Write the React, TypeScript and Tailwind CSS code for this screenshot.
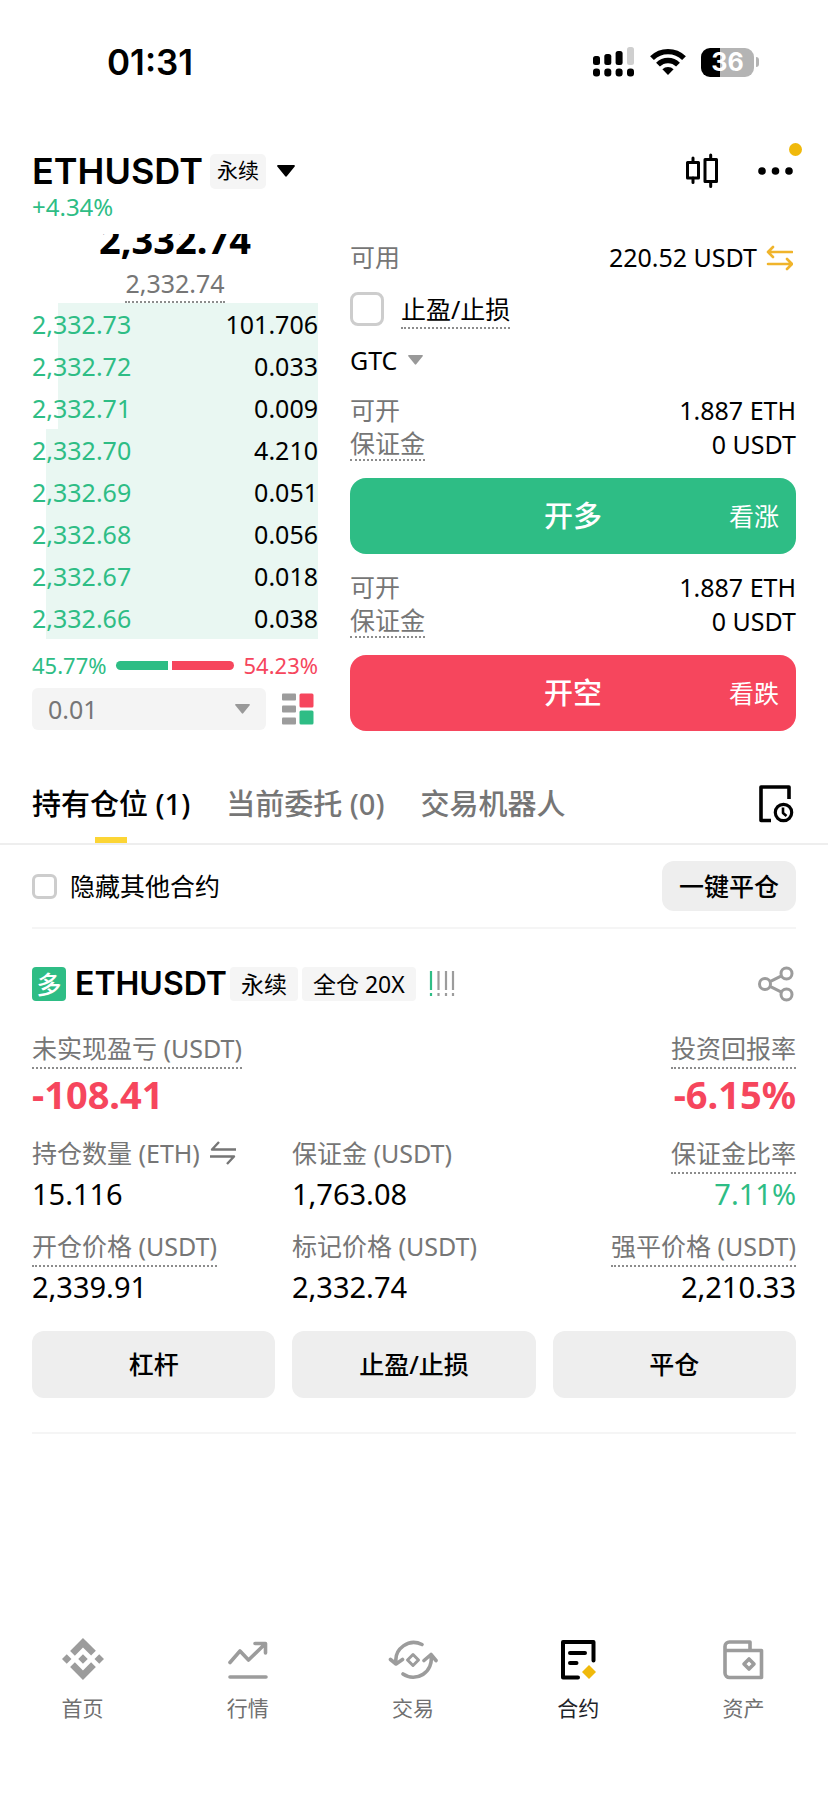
import React from "react";

const bids = [
  { price: "2,332.73", size: "101.706", depth: 91 },
  { price: "2,332.72", size: "0.033", depth: 91 },
  { price: "2,332.71", size: "0.009", depth: 91 },
  { price: "2,332.70", size: "4.210", depth: 95 },
  { price: "2,332.69", size: "0.051", depth: 95 },
  { price: "2,332.68", size: "0.056", depth: 95 },
  { price: "2,332.67", size: "0.018", depth: 95 },
  { price: "2,332.66", size: "0.038", depth: 95 },
];

function StatusBar() {
  return (
    <div className="flex h-20 items-end justify-between pl-[107px] pr-[69px]">
      <span className="font-['Inter',sans-serif] text-[35px] font-semibold leading-9">01:31</span>
      <div className="flex h-9 items-center gap-[15px]">
        <svg width="42" height="30" viewBox="0 0 42 30" aria-hidden="true">
          <rect x="0" y="9" width="7" height="9" rx="2.5" />
          <rect x="11.3" y="7" width="7" height="11" rx="2.5" />
          <rect x="22.6" y="4" width="7" height="14" rx="2.5" />
          <rect x="34" y="0" width="7" height="18" rx="2.5" fill="#cfcfcf" />
          <rect x="0" y="21.5" width="7" height="8" rx="3" />
          <rect x="11.3" y="21.5" width="7" height="8" rx="3" />
          <rect x="22.6" y="21.5" width="7" height="8" rx="3" />
          <rect x="34" y="21.5" width="7" height="8" rx="3" />
        </svg>
        <svg width="36" height="28" viewBox="0 0 36 28" fill="none" stroke="#000" strokeWidth="5.4" aria-hidden="true">
          <path d="M2 10.2a22.8 22.8 0 0 1 32 0" />
          <path d="M8 16.6a14.2 14.2 0 0 1 20 0" />
          <path d="M18 27l-5.6-5.8a8 8 0 0 1 11.2 0z" fill="#000" stroke="none" />
        </svg>
        <div className="flex items-center gap-[2px]">
          <span className="flex h-[29px] w-[53px] items-center justify-center rounded-[9px] bg-[linear-gradient(90deg,#000_36%,#b4b4b4_36%)] font-['Inter',sans-serif] text-[25px] font-bold leading-none text-white">
            36
          </span>
          <span className="h-[10px] w-[3px] rounded-r-full bg-[#b4b4b4]" />
        </div>
      </div>
    </div>
  );
}

function Header() {
  return (
    <header className="px-8 pt-[71px]">
      <div className="flex h-10 items-center justify-between">
        <button type="button" className="flex items-center">
          <h1 className="font-['Inter',sans-serif] text-[36px] font-semibold leading-10">ETHUSDT</h1>
          <span className="ml-[7px] flex h-[35px] items-center rounded-[5px] bg-[#f5f5f5] px-[7px] text-[21px]">永续</span>
          <svg className="ml-[11px]" width="18" height="12" viewBox="0 0 18 12" aria-hidden="true">
            <path d="M1 0h16a1 1 0 0 1 .7 1.600l-7.700 9.500a1.300 1.300 0 0 1-2 0L.3 1.600A1 1 0 0 1 1 0z" />
          </svg>
        </button>
        <div className="flex items-center gap-[38px] pr-[3px]">
          <button type="button" aria-label="K线图">
            <svg width="34" height="36" viewBox="0 0 34 36" fill="none" stroke="#000" strokeWidth="3" strokeLinejoin="round" strokeLinecap="round" aria-hidden="true">
              <rect x="2.500" y="9.500" width="11" height="15.500" />
              <path d="M8 5v4.500M8 25v4.500" />
              <rect x="20" y="6.500" width="11.500" height="22" />
              <path d="M25.700 2v4.500M25.700 28.500v5" />
            </svg>
          </button>
          <button type="button" aria-label="更多" className="relative">
            <svg width="36" height="36" viewBox="0 0 36 36" aria-hidden="true">
              <circle cx="5" cy="18" r="3.800" />
              <circle cx="18.500" cy="18" r="3.800" />
              <circle cx="32" cy="18" r="3.800" />
            </svg>
            <span className="absolute -right-[9px] -top-[10px] size-[13px] rounded-full bg-[#f0b90b]" />
          </button>
        </div>
      </div>
      <p className="text-[24px] leading-8 text-[#2ebd85]">+4.34%</p>
    </header>
  );
}

function CaretDown({ className = "" }: { className?: string }) {
  return (
    <svg className={className} width="15" height="10" viewBox="0 0 15 10" fill="#999" aria-hidden="true">
      <path d="M.8 0h13.400a.7.7 0 0 1 .5 1.200L8.200 9.300a1 1 0 0 1-1.400 0L.3 1.200A.7.700 0 0 1 .8 0z" />
    </svg>
  );
}

function OrderBook() {
  return (
    <section className="flex flex-col">
      <div className="flex h-[27px] items-end justify-center overflow-hidden">
        <span className="text-[38px] font-bold leading-[44px]">2,332.74</span>
      </div>
      <div className="flex h-[42px] items-end justify-center">
        <span className="border-b-2 border-dotted border-[#8c8c8c] text-[25px] leading-9 text-[#767676]">2,332.74</span>
      </div>
      <table className="w-full border-collapse text-[25px] leading-8">
        <tbody>
          {bids.map((b) => (
            <tr
              key={b.price}
              className="h-[42px]"
              style={{ background: `linear-gradient(to left, #e9f7f2 ${b.depth}%, transparent ${b.depth}%)` }}
            >
              <td className="p-0 text-left text-[#2ebd85]">{b.price}</td>
              <td className="p-0 text-right">{b.size}</td>
            </tr>
          ))}
        </tbody>
      </table>
      <div className="mt-[10px] flex h-8 items-center gap-[9px] text-[22px]">
        <span className="text-[#2ebd85]">45.77%</span>
        <span className="flex h-[9px] flex-1 gap-1">
          <span className="rounded-l-full bg-[#2ebd85]" style={{ flexGrow: 45.77 }} />
          <span className="rounded-r-full bg-[#f6465d]" style={{ flexGrow: 54.23 }} />
        </span>
        <span className="text-[#f6465d]">54.23%</span>
      </div>
      <div className="mt-[7px] flex items-center gap-4">
        <div className="relative flex-1">
          <select
            aria-label="价格精度"
            className="h-[42px] w-full appearance-none rounded-md bg-[#f4f4f4] px-4 text-[25px] leading-8 text-[#767676]"
          >
            <option>0.01</option>
          </select>
          <CaretDown className="pointer-events-none absolute right-4 top-4" />
        </div>
        <button type="button" aria-label="盘口显示" className="pr-1">
          <svg width="32" height="32" viewBox="0 0 32 32" aria-hidden="true">
            <rect x="0" y="0.500" width="14" height="7" rx="1" fill="#9c9c9c" />
            <rect x="0" y="12.500" width="14" height="7" rx="1" fill="#9c9c9c" />
            <rect x="0" y="24.500" width="14" height="7" rx="1" fill="#9c9c9c" />
            <rect x="17.500" y="0.500" width="14" height="14" rx="1.500" fill="#f6465d" />
            <rect x="17.500" y="17.500" width="14" height="14" rx="1.500" fill="#2ebd85" />
          </svg>
        </button>
      </div>
    </section>
  );
}

function OrderLimits() {
  return (
    <dl className="grid grid-cols-[auto_1fr] text-[25px] leading-[34px]">
      <dt className="text-[#767676]">可开</dt>
      <dd className="text-right">1.887 ETH</dd>
      <dt className="border-b-2 border-dotted border-[#8c8c8c] leading-8 text-[#767676]">保证金</dt>
      <dd className="text-right">0 USDT</dd>
    </dl>
  );
}

function TradeButton({ label, hint, className }: { label: string; hint: string; className: string }) {
  return (
    <button
      type="button"
      className={`grid h-[76px] w-full grid-cols-[1fr_auto_1fr] items-center rounded-2xl px-[17px] text-white ${className}`}
    >
      <span className="col-start-2 text-[29px] font-medium leading-9">{label}</span>
      <span className="text-right text-[25px] leading-9">{hint}</span>
    </button>
  );
}

function OrderForm() {
  return (
    <section className="flex flex-col">
      <div className="mt-2 flex h-8 items-center text-[25px]">
        <span className="text-[#767676]">可用</span>
        <span className="ml-auto">220.52 USDT</span>
        <button type="button" aria-label="划转" className="ml-[9px] pr-[3px]">
          <svg width="27" height="26" viewBox="0 0 27 26" fill="none" stroke="#f0b42b" strokeWidth="2.600" strokeLinecap="round" strokeLinejoin="round" aria-hidden="true">
            <path d="M26 7H2M7 2L2 7l5 5" />
            <path d="M2 19h24M21 14l5 5-5 5" />
          </svg>
        </button>
      </div>
      <label className="mt-[18px] flex h-[38px] items-start gap-[17px] text-[25px]">
        <input type="checkbox" className="size-[34px] appearance-none rounded-lg border-[3px] border-[#cdcdcd]" />
        <span className="border-b-2 border-dotted border-[#8c8c8c] leading-[35px]">止盈/止损</span>
      </label>
      <div className="mt-[14px] flex h-8 items-center gap-[10px]">
        <select aria-label="有效方式" className="appearance-none text-[25px] leading-8">
          <option>GTC</option>
        </select>
        <CaretDown />
      </div>
      <div className="mt-[17px]">
        <OrderLimits />
      </div>
      <div className="mt-[17px]">
        <TradeButton label="开多" hint="看涨" className="bg-[#2ebd85]" />
      </div>
      <div className="mt-4">
        <OrderLimits />
      </div>
      <div className="mt-[17px]">
        <TradeButton label="开空" hint="看跌" className="bg-[#f6465d]" />
      </div>
    </section>
  );
}

function Tabs() {
  return (
    <div className="mt-[37px] flex h-[77px] items-stretch justify-between border-b-2 border-[#eeeeee] px-8">
      <div className="flex gap-9 text-[29px] leading-9 text-[#767676]" role="tablist">
        <button type="button" role="tab" aria-selected="true" className="flex flex-col items-center justify-between pt-[18px] font-medium text-black">
          持有仓位 (1)
          <span className="h-[6px] w-8 bg-[#fcd535]" />
        </button>
        <button type="button" role="tab" aria-selected="false" className="flex items-start pt-[18px] font-medium">
          当前委托 (0)
        </button>
        <button type="button" role="tab" aria-selected="false" className="flex items-start pt-[18px] font-medium">
          交易机器人
        </button>
      </div>
      <button type="button" aria-label="历史记录" className="flex items-start pr-px pt-[17px]">
        <svg width="36" height="38" viewBox="0 0 36 38" fill="none" stroke="#000" strokeWidth="3.600" strokeLinejoin="round" aria-hidden="true">
          <path d="M30 14V2H2v33.500h10" />
          <circle cx="24.500" cy="27.500" r="8.200" strokeWidth="3.200" />
          <path d="M24 22.500v5.500l3.500 3" strokeWidth="2.600" />
        </svg>
      </button>
    </div>
  );
}

function Metric({
  label,
  value,
  dotted = false,
  right = false,
  valueClass = "text-[29px] leading-9",
  icon,
}: {
  label: string;
  value: string;
  dotted?: boolean;
  right?: boolean;
  valueClass?: string;
  icon?: React.ReactNode;
}) {
  return (
    <div className={`flex flex-col whitespace-nowrap ${right ? "items-end" : "items-start"}`}>
      <dt
        className={`flex h-[39px] items-start gap-[10px] border-b-2 text-[25px] leading-9 text-[#767676] ${
          dotted ? "border-dotted border-[#8c8c8c]" : "border-transparent"
        }`}
      >
        {label}
        {icon}
      </dt>
      <dd className={`mt-[2px] ${valueClass}`}>{value}</dd>
    </div>
  );
}

function Position() {
  const action = "h-[67px] rounded-xl bg-[#eeeeee] pb-[2px] text-[25px] font-medium leading-8";
  return (
    <article className="mx-8 border-b-2 border-[#f5f5f5] pb-[34px] pt-[37px]">
      <div className="flex h-9 items-center">
        <span className="flex size-[34px] items-center justify-center rounded bg-[#2ebd85] text-[25px] font-medium leading-none text-white">多</span>
        <h2 className="ml-[9px] font-['Inter',sans-serif] text-[32px] font-semibold leading-9">ETHUSDT</h2>
        <span className="ml-[3px] flex h-[34px] items-center rounded bg-[#f5f5f5] px-[11px] text-[23px]">永续</span>
        <span className="ml-1 flex h-[34px] items-center rounded bg-[#f5f5f5] px-[11px] text-[23px]">全仓 20X</span>
        <svg className="ml-[12px]" width="28" height="28" viewBox="0 0 28 28" fill="none" strokeWidth="2.200" aria-hidden="true">
          <path d="M3 1v19M3 23v3" stroke="#2ebd85" />
          <path d="M10.500 1v19M10.500 23v3M18 1v19M18 23v3M25 1v19M25 23v3" stroke="#9c9c9c" />
        </svg>
        <button type="button" aria-label="分享" className="ml-auto pr-[2px]">
          <svg width="36" height="36" viewBox="0 0 36 36" fill="none" stroke="#9c9c9c" strokeWidth="3" aria-hidden="true">
            <circle cx="7" cy="18" r="5.500" />
            <circle cx="28.500" cy="7.500" r="5.500" />
            <circle cx="28.500" cy="28.500" r="5.500" />
            <path d="M12 15.600l11.500-5.700M12 20.400l11.500 5.700" />
          </svg>
        </button>
      </div>
      <dl className="mt-7 flex justify-between">
        <Metric label="未实现盈亏 (USDT)" value="-108.41" dotted valueClass="text-[38px] leading-[46px] font-bold text-[#f6465d]" />
        <Metric label="投资回报率" value="-6.15%" dotted right valueClass="text-[38px] leading-[46px] font-bold text-[#f6465d]" />
      </dl>
      <dl className="mt-[18px] grid grid-cols-3 gap-x-4 gap-y-4">
        <Metric
          label="持仓数量 (ETH)"
          value="15.116"
          icon={
            <svg className="mt-[5px]" width="26" height="26" viewBox="0 0 26 26" fill="none" stroke="#767676" strokeWidth="2.400" strokeLinejoin="round" aria-hidden="true">
              <path d="M26 9.500H2L9 2" />
              <path d="M0 16.500h24L17 24" />
            </svg>
          }
        />
        <Metric label="保证金 (USDT)" value="1,763.08" />
        <Metric label="保证金比率" value="7.11%" dotted right valueClass="text-[29px] leading-9 text-[#2ebd85]" />
        <Metric label="开仓价格 (USDT)" value="2,339.91" dotted />
        <Metric label="标记价格 (USDT)" value="2,332.74" />
        <Metric label="强平价格 (USDT)" value="2,210.33" dotted right />
      </dl>
      <div className="mt-[26px] grid grid-cols-3 gap-[17px]">
        <button type="button" className={action}>杠杆</button>
        <button type="button" className={action}>止盈/止损</button>
        <button type="button" className={action}>平仓</button>
      </div>
    </article>
  );
}

const stroke = {
  fill: "none",
  stroke: "currentColor",
  strokeWidth: 3.6,
  strokeLinecap: "round" as const,
  strokeLinejoin: "round" as const,
};

const navItems = [
  {
    label: "首页",
    icon: (
      <svg width="42" height="42" viewBox="0 0 24 24" fill="currentColor" aria-hidden="true">
        <path d="M16.624 13.9202l2.7175 2.7154-7.353 7.353-7.353-7.352 2.7175-2.7164 4.6355 4.6595 4.6356-4.6595zm4.6366-4.6366L24 12l-2.7154 2.7164L18.5682 12l2.6924-2.7164zm-9.272.001l2.7163 2.6914-2.7164 2.7174v-.001L9.2721 12l2.7164-2.7154zm-9.2722-.001L5.4088 12l-2.6914 2.6924L0 12l2.7164-2.7164zM11.9885.0115l7.353 7.329-2.7174 2.7154-4.6356-4.6356-4.6355 4.6595-2.7174-2.7154 7.353-7.353z" />
      </svg>
    ),
  },
  {
    label: "行情",
    icon: (
      <svg width="42" height="42" viewBox="0 0 42 42" {...stroke} aria-hidden="true">
        <path d="M3 24.500L13 13l8.500 9L38 6M28 5.500h10.500V15M3 39h36" />
      </svg>
    ),
  },
  {
    label: "交易",
    icon: (
      <svg width="50" height="42" viewBox="0 0 50 42" {...stroke} aria-hidden="true">
        <path d="M34 6.500A18 18 0 0 0 8 25M2.500 21.500L8 26l6.500-4.500" />
        <path d="M15 36A18 18 0 0 0 43 18M36 22.500l7-6 5 6" />
        <path d="M25 16.500l5.500 5.500-5.500 5.500-5.500-5.500z" strokeWidth="3" />
      </svg>
    ),
  },
  {
    label: "合约",
    active: true,
    icon: (
      <svg width="42" height="42" viewBox="0 0 42 42" {...stroke} aria-hidden="true">
        <path d="M36.500 22.500V4H6v35.500h15M13 15h15M13 25h6.500" strokeWidth="4" />
        <path d="M32 27l7 7-7 7-7-7z" fill="#f0b90b" stroke="none" />
      </svg>
    ),
  },
  {
    label: "资产",
    icon: (
      <svg width="42" height="42" viewBox="0 0 42 42" {...stroke} aria-hidden="true">
        <path d="M3 12.500V8.500a4.500 4.500 0 0 1 4.500-4.500H28v8.500M3 12.500h36.500v27H7.500a4.500 4.500 0 0 1-4.500-4.500z" />
        <path d="M27 21l5 5-5 5-5-5z" />
      </svg>
    ),
  },
];

function BottomNav() {
  return (
    <nav className="mt-auto grid grid-cols-5 pb-[74px] pr-[2px] pt-8">
      {navItems.map((item) => (
        <a key={item.label} href="#" className="flex flex-col items-center gap-[14px]">
          <span className={item.active ? "text-black" : "text-[#9c9c9c]"}>{item.icon}</span>
          <span className={`text-[21px] leading-7 ${item.active ? "text-[#1e2329]" : "text-[#707070]"}`}>{item.label}</span>
        </a>
      ))}
    </nav>
  );
}

export default function App() {
  return (
    <div className="flex min-h-screen flex-col bg-white font-['Noto_Sans','Noto_Sans_CJK_SC',sans-serif] text-black" lang="zh-CN">
      <StatusBar />
      <Header />
      <main>
        <div className="mt-[11px] grid grid-cols-[286fr_446fr] gap-8 px-8">
          <OrderBook />
          <OrderForm />
        </div>
        <Tabs />
        <div className="mx-8 flex h-[84px] items-center justify-between border-b-2 border-[#f5f5f5]">
          <label className="flex items-center gap-[13px] text-[25px] leading-8">
            <input type="checkbox" className="size-[25px] appearance-none rounded-md border-[3px] border-[#cdcdcd]" />
            隐藏其他合约
          </label>
          <button type="button" className="h-[50px] rounded-xl bg-[#eeeeee] px-[17px] text-[25px] font-medium leading-8">一键平仓</button>
        </div>
        <Position />
      </main>
      <BottomNav />
    </div>
  );
}
